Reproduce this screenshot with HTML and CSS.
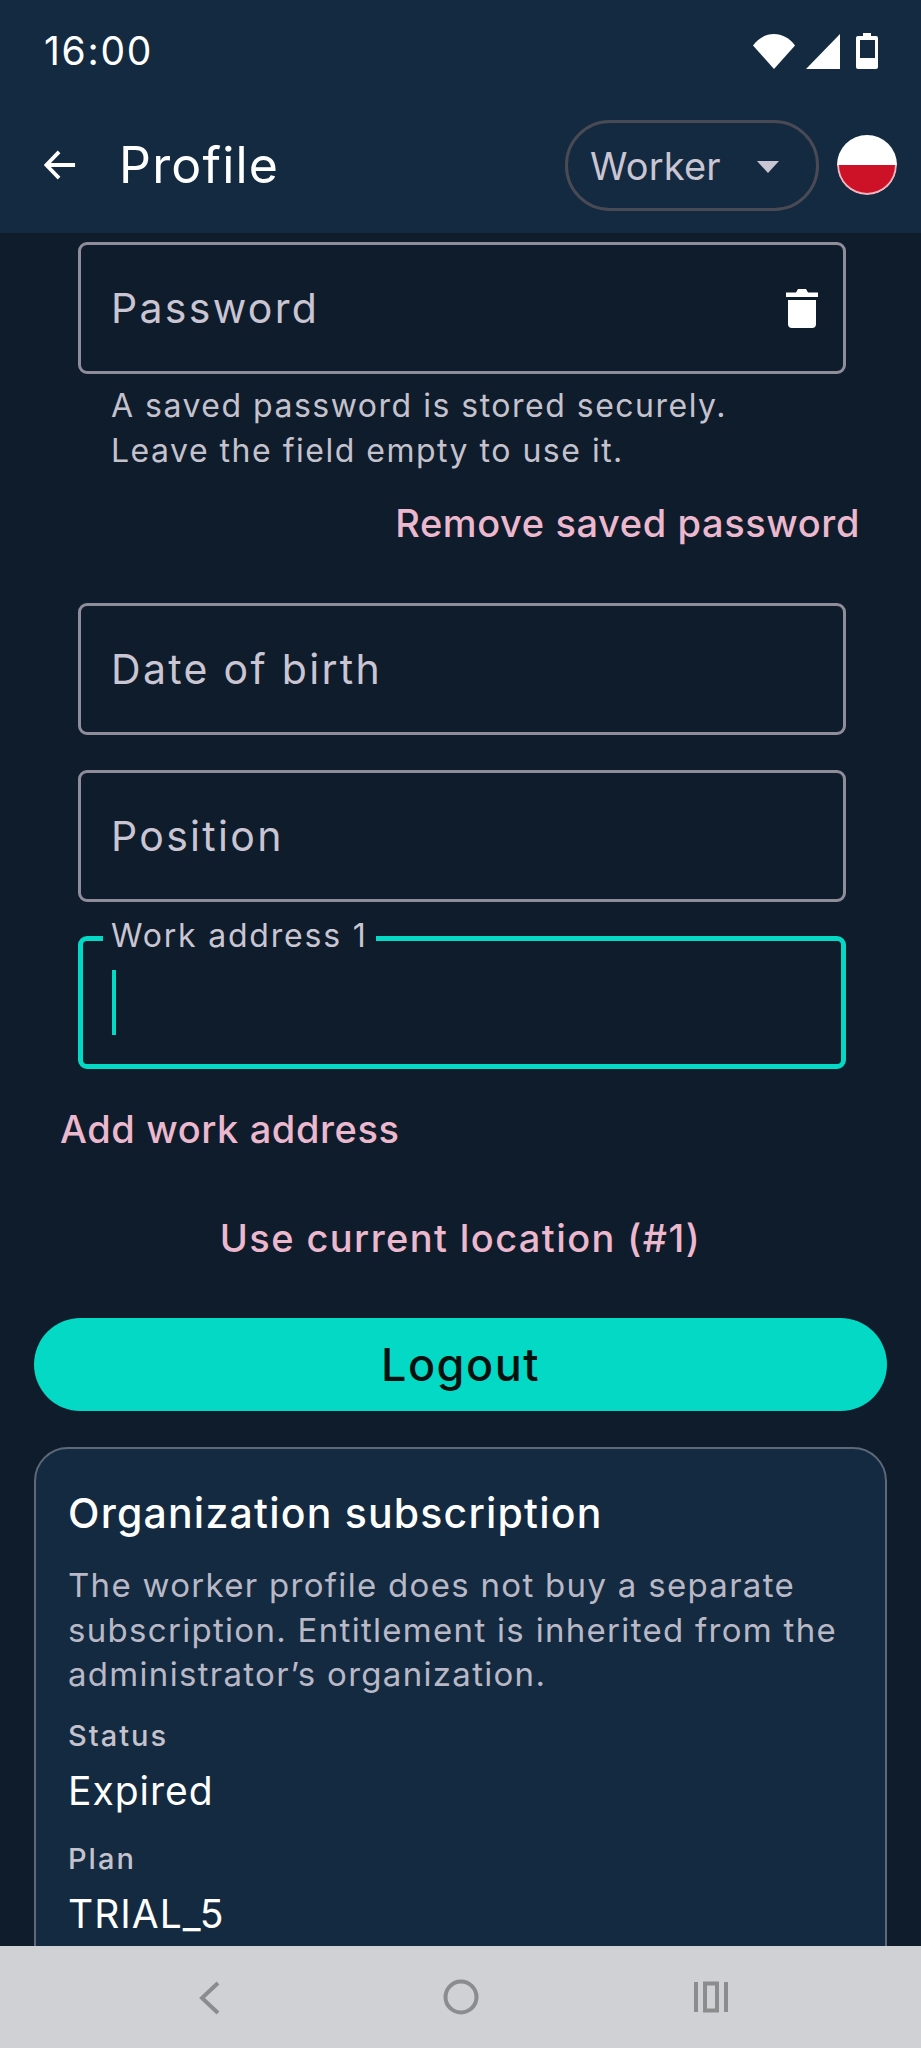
FILE: index.html
```html
<!DOCTYPE html>
<html lang="en">
<head>
<meta charset="utf-8">
<title>Profile</title>
<link rel="stylesheet" href="styles.css">
</head>
<body>
<div class="screen">
  <header class="top">
    <div class="status">
      <span class="time">16:00</span>
      <div class="status-icons">
        <svg class="ic-wifi" viewBox="0 0 42 35"><path d="M0 11.5C5.5 4 13 0 21 0s15.500 4 21 11.500L21 35z"/></svg>
        <svg class="ic-signal" viewBox="0 0 34 35"><path d="M34 0v35H0z"/></svg>
        <svg class="ic-battery" viewBox="0 0 22 36"><path fill-rule="evenodd" d="M7 0h8v3h5a2 2 0 0 1 2 2v29a2 2 0 0 1-2 2H2a2 2 0 0 1-2-2V5a2 2 0 0 1 2-2h5zM4 7v18h15V7z"/></svg>
      </div>
    </div>
    <div class="appbar">
      <svg class="ic-back" viewBox="0 0 34 32"><path d="M33 16H3M16 2 2.500 16 16 30" fill="none" stroke="#fff" stroke-width="4"/></svg>
      <h1 class="title">Profile</h1>
      <div class="pill">
        <span class="pill-label">Worker</span>
        <span class="caret"></span>
      </div>
      <div class="flag"><span class="flag-white"></span><span class="flag-red"></span></div>
    </div>
  </header>

  <main class="content">
    <div class="field field-first">
      <span class="placeholder">Password</span>
      <svg class="ic-trash" viewBox="0 0 32 39"><path d="M10 3.500 12 0h8l2 3.500h10V8H0V3.500zM2 11h28v24a4 4 0 0 1-4 4H6a4 4 0 0 1-4-4z"/></svg>
    </div>
    <p class="helper">A saved password is stored securely.<br>Leave the field empty to use it.</p>
    <div class="link-row-right"><a class="link">Remove saved password</a></div>
    <div class="field field-date"><span class="placeholder">Date of birth</span></div>
    <div class="field field-next"><span class="placeholder">Position</span></div>
    <div class="field field-focus">
      <span class="float-label">Work address 1</span>
      <span class="cursor"></span>
    </div>
    <div class="link-row-left"><a class="link">Add work address</a></div>
    <div class="link-row-center"><a class="link link-wide">Use current location (#1)</a></div>
    <button class="logout">Logout</button>
    <section class="card">
      <h2 class="card-title">Organization subscription</h2>
      <p class="card-text">The worker profile does not buy a separate subscription. Entitlement is inherited from the administrator’s organization.</p>
      <div class="meta meta-first">Status</div>
      <div class="value">Expired</div>
      <div class="meta">Plan</div>
      <div class="value">TRIAL_5</div>
    </section>
  </main>

  <nav class="navbar">
    <svg class="ic-nav-back" viewBox="0 0 22 34"><path d="M20 2 4 17l16 15" fill="none" stroke="#8a8c8e" stroke-width="4"/></svg>
    <svg class="ic-nav-home" viewBox="0 0 36 36"><circle cx="18" cy="18" r="15.500" fill="none" stroke="#8a8c8e" stroke-width="4"/></svg>
    <svg class="ic-nav-recent" viewBox="0 0 36 32"><path d="M1 1h4v30H1zM31 1h4v30h-4z" fill="#8a8c8e"/><rect x="12" y="2.500" width="12" height="27" fill="none" stroke="#8a8c8e" stroke-width="4"/></svg>
  </nav>
</div>
</body>
</html>
```
FILE: styles.css
```css
* { box-sizing: border-box; }
html, body { margin: 0; padding: 0; }
body { width: 921px; height: 2048px; overflow: hidden; background: #0f1c2c; font-family: Inter, "Liberation Sans", sans-serif; color: #fff; }
p, h1, h2 { margin: 0; font-weight: 400; }

.screen { width: 921px; height: 2048px; display: flex; flex-direction: column; overflow: hidden; }

.top { height: 233px; flex: none; background: #142a40; }
.status { height: 102px; display: flex; align-items: center; justify-content: space-between; padding: 0 43px 0 44px; }
.time { font-size: 39px; line-height: 44px; letter-spacing: 1.700px; }
.status-icons { display: flex; align-items: center; gap: 11px; }
.status-icons svg { fill: #fff; display: block; height: 35px; }
.ic-wifi { width: 42px; }
.ic-signal { width: 34px; margin-right: 5px; }
.ic-battery { width: 22px; height: 36px !important; }

.appbar { height: 131px; display: flex; align-items: flex-start; padding: 18px 24px 0 44px; }
.ic-back { width: 32px; height: 32px; margin-top: 29px; flex: none; }
.title { font-size: 50px; line-height: 90px; margin-left: 43px; flex: 1; letter-spacing: 1.2px; }
.pill { width: 254px; height: 91px; border: 3px solid #4a4a55; border-radius: 45px; display: flex; align-items: center; padding-left: 22px; flex: none; }
.pill-label { font-size: 38px; color: #c9c5d2; width: 167px; letter-spacing: 0.2px; }
.caret { width: 0; height: 0; border-left: 11px solid transparent; border-right: 11px solid transparent; border-top: 12px solid #c9c5d2; margin-top: 3px; }
.flag { width: 60px; height: 60px; border-radius: 50%; overflow: hidden; margin-left: 18px; margin-top: 15px; flex: none; display: flex; flex-direction: column; }
.flag-white { height: 30px; background: #fff; }
.flag-red { height: 30px; background: #cd1228; border: 2px solid #f0b4bf; border-top: 0; border-radius: 0 0 30px 30px; }

.content { flex: 1; min-height: 0; overflow: hidden; padding: 9px 34px 0; }

.field { position: relative; height: 132px; margin: 0 41px 0 44px; border: 3px solid #8f8d99; border-radius: 9px; display: flex; align-items: center; justify-content: space-between; padding: 0 30px; }
.field-date { margin-top: 56px; }
.field-next { margin-top: 35px; }
.field-focus { border: 5px solid #03d9c5; height: 133px; margin-top: 34px; padding: 0 29px; }
.placeholder { font-size: 41px; letter-spacing: 2.300px; color: #c9c5d2; }
.ic-trash { width: 32px; height: 39px; fill: #fff; margin-right: -5px; }
.float-label { position: absolute; left: 20px; top: -23px; height: 36px; padding: 0 8px; background: #0f1c2c; font-size: 32px; line-height: 36px; letter-spacing: 1.800px; color: #c9c5d2; }
.cursor { width: 4px; height: 65px; background: #03d9c5; }

.helper { margin: 9px 0 0 77px; font-size: 32px; line-height: 45px; letter-spacing: 1.500px; color: #c4c2cd; }

.link { font-size: 38px; line-height: 48px; font-weight: 500; letter-spacing: 0.6px; color: #ecb8cd; }
.link-wide { letter-spacing: 1.400px; }
.link-row-right { margin-top: 26px; height: 48px; display: flex; justify-content: flex-end; padding-right: 27px; }
.link-row-left { margin-top: 36px; height: 48px; padding-left: 26px; }
.link-row-center { margin-top: 61px; height: 48px; text-align: center; }

.logout { display: block; width: 853px; height: 93px; margin-top: 56px; border: 0; border-radius: 47px; background: #03d9c5; color: #06100f; font-family: inherit; font-size: 45px; font-weight: 500; letter-spacing: 1.500px; }

.card { margin-top: 36px; height: 620px; background: #142a40; border: 2px solid #5d6878; border-radius: 34px; padding: 36px 32px 0; }
.card-title { font-size: 41px; line-height: 56px; font-weight: 500; letter-spacing: 1.200px; }
.card-text { margin-top: 22px; font-size: 33px; line-height: 44.600px; letter-spacing: 1.300px; color: #b9b8c6; }
.meta { margin-top: 20px; font-size: 29px; line-height: 40px; letter-spacing: 2px; font-weight: 500; color: #c4c2cd; }
.meta-first { margin-top: 19px; }
.value { margin-top: 7px; font-size: 39px; line-height: 56px; letter-spacing: 1px; }

.navbar { height: 102px; flex: none; background: #cfd1d5; position: relative; }
.navbar svg { position: absolute; display: block; }
.ic-nav-back { left: 198px; top: 35px; width: 22px; height: 34px; }
.ic-nav-home { left: 443px; top: 33px; width: 36px; height: 36px; }
.ic-nav-recent { left: 693px; top: 35px; width: 36px; height: 32px; }
```
